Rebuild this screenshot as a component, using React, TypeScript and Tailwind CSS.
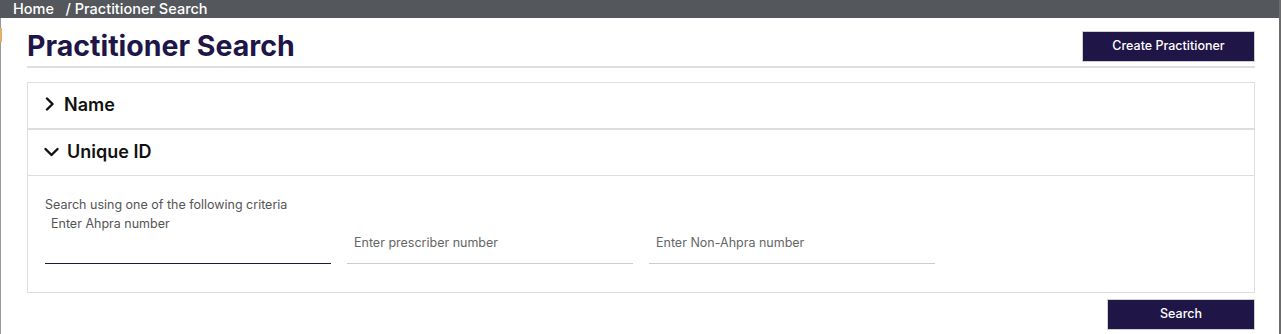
import React from "react";

const Chevron = ({ dir }: { dir: "right" | "down" }) =>
  dir === "right" ? (
    <svg width="10" height="14" viewBox="0 0 10 14" className="shrink-0">
      <path d="M2 1.5 L7.5 7 L2 12.5" fill="none" stroke="#111" strokeWidth="2.4" strokeLinecap="round" strokeLinejoin="round" />
    </svg>
  ) : (
    <svg width="15" height="10" viewBox="0 0 15 10" className="shrink-0">
      <path d="M1.5 2 L7.5 8 L13.5 2" fill="none" stroke="#111" strokeWidth="2.4" strokeLinecap="round" strokeLinejoin="round" />
    </svg>
  );

export default function App() {
  return (
    <div className="w-[1281px] h-[334px] bg-white overflow-hidden flex flex-col font-['Inter',sans-serif]">
      <div className="h-[18px] shrink-0 bg-[#54575b] text-white text-[14.5px] leading-[18px] font-medium pl-[13px] border-r-2 border-[#6b6b6b] whitespace-pre">
        Home   / Practitioner Search
      </div>
      <div className="flex-1 flex flex-col border-l border-l-[#9a9a9a] border-r-2 border-r-[#6b6b6b] pl-[26px] pr-[24px] relative">
        <div className="absolute left-[-1px] top-[10px] w-[2px] h-[14px] bg-[#e3b06a]" />
        <div className="flex items-center justify-between mt-[13px] h-[31px]">
          <h1 className="text-[28.5px] leading-[31px] font-bold text-[#201547] -mt-[3px]">Practitioner Search</h1>
          <button className="w-[173px] h-[31px] bg-[#201547] text-white text-[12.5px] font-medium border border-[#d0d0d0]">
            Create Practitioner
          </button>
        </div>
        <div className="mt-[4px] h-[2px] bg-[#dedede]" />
        <div className="mt-[14px] border border-[#dedede] flex flex-col">
          <div className="h-[47px] flex items-center pl-[17px] pb-[3px] gap-[9px] border-b-2 border-[#dedede]">
            <Chevron dir="right" />
            <span className="text-[18px] font-semibold text-[#111]">Name</span>
          </div>
          <div className="h-[46px] flex items-center pl-[16px] pb-[2px] gap-[8px] border-b border-[#dedede]">
            <Chevron dir="down" />
            <span className="text-[18px] font-semibold text-[#111]">Unique ID</span>
          </div>
          <div className="h-[116px] px-[17px] pt-[22px]">
            <div className="text-[12.5px] leading-[14px] text-[#555]">Search using one of the following criteria</div>
            <div className="flex gap-[16px]">
              <div className="w-[286px] flex flex-col">
                <div className="text-[12.5px] leading-[14px] text-[#555] pl-[6px] mt-[5px]">Enter Ahpra number</div>
                <div className="h-[32px]" />
                <div className="h-[1px] bg-[#201547]" />
              </div>
              <div className="w-[286px] flex flex-col justify-end">
                <div className="text-[12.5px] leading-[14px] text-[#666] pl-[7px] mb-[13px]">Enter prescriber number</div>
                <div className="h-[1px] bg-[#cccccc]" />
              </div>
              <div className="w-[286px] flex flex-col justify-end">
                <div className="text-[12.5px] leading-[14px] text-[#666] pl-[7px] mb-[13px]">Enter Non-Ahpra number</div>
                <div className="h-[1px] bg-[#cccccc]" />
              </div>
            </div>
          </div>
        </div>
        <div className="flex justify-end mt-[6px]">
          <button className="w-[148px] h-[31px] bg-[#201547] text-white text-[12.5px] font-medium border border-[#d0d0d0]">
            Search
          </button>
        </div>
      </div>
    </div>
  );
}
